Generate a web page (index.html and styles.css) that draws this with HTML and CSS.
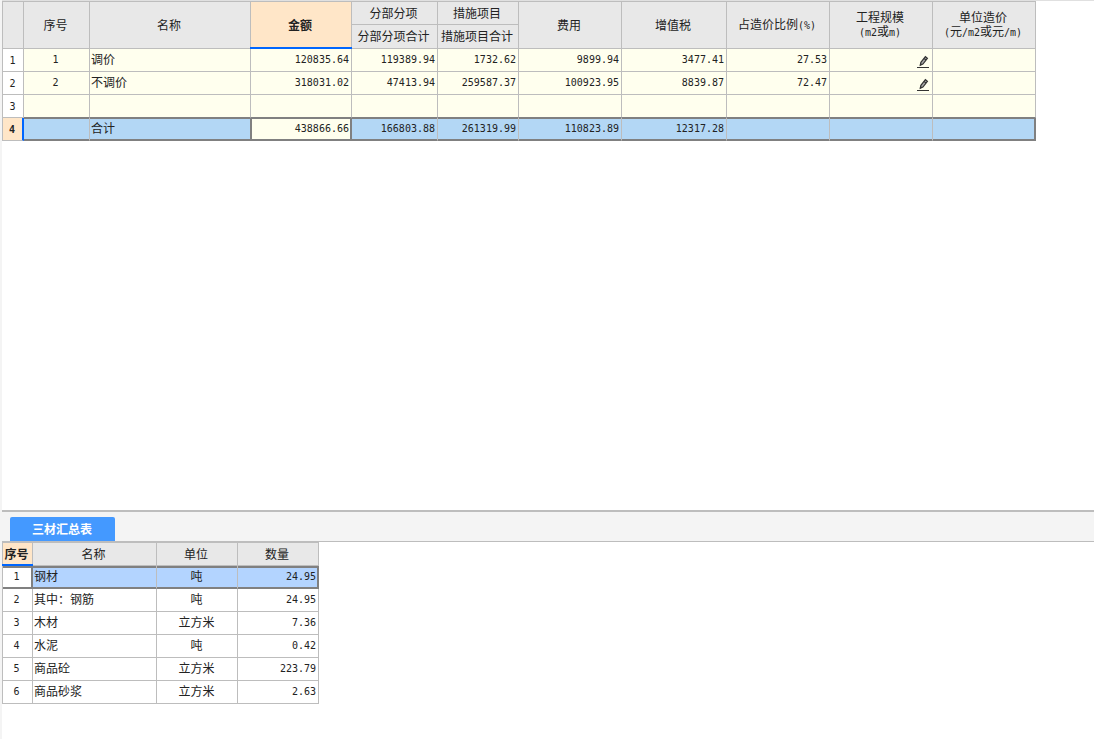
FILE: index.html
```html
<!DOCTYPE html>
<html lang="zh-CN">
<head>
<meta charset="utf-8">
<meta name="viewport" content="width=device-width, initial-scale=1">
<title>造价汇总</title>
<link rel="stylesheet" href="styles.css">
</head>
<body>
<main class="workspace">
  <section class="pane-main">
    <table class="grid cost">
      <colgroup>
        <col class="c-row"><col class="c-no"><col class="c-name"><col class="c-amount"><col class="c-part"><col class="c-measure"><col class="c-wide"><col class="c-tax"><col class="c-wide"><col class="c-wide"><col class="c-wide">
      </colgroup>
      <thead>
        <tr class="head-top">
          <th rowspan="2"></th>
          <th rowspan="2">序号</th>
          <th rowspan="2">名称</th>
          <th rowspan="2" class="active">金额</th>
          <th>分部分项</th>
          <th>措施项目</th>
          <th rowspan="2">费用</th>
          <th rowspan="2">增值税</th>
          <th rowspan="2">占造价比例<span class="mono">(%)</span></th>
          <th rowspan="2" class="two-line">工程规模<br><span class="mono">(m2</span>或<span class="mono">m)</span></th>
          <th rowspan="2" class="two-line">单位造价<br><span class="mono">(</span>元<span class="mono">/m2</span>或元<span class="mono">/m)</span></th>
        </tr>
        <tr class="head-sub">
          <th>分部分项合计</th>
          <th>措施项目合计</th>
        </tr>
      </thead>
      <tbody>
        <tr>
          <th class="row-no">1</th><td class="mid mono">1</td><td>调价</td><td class="num">120835.64</td><td class="num">119389.94</td><td class="num">1732.62</td><td class="num">9899.94</td><td class="num">3477.41</td><td class="num">27.53</td>
          <td class="tool"><button class="edit" type="button" aria-label="编辑"><svg viewBox="0 0 12 13" width="12" height="13"><path d="M3.3 10.2 3.9 7.3 8.4 1.7 10.4 3.3 5.9 9Z" fill="#aaa" stroke="#333" stroke-width="1.2"/><path d="M7 3.4 9 5M3.3 10.2 4.2 8.6" stroke="#333" stroke-width="1.2"/><path d="M0 12.5H12" stroke="#333"/></svg></button></td><td></td>
        </tr>
        <tr>
          <th class="row-no">2</th><td class="mid mono">2</td><td>不调价</td><td class="num">318031.02</td><td class="num">47413.94</td><td class="num">259587.37</td><td class="num">100923.95</td><td class="num">8839.87</td><td class="num">72.47</td>
          <td class="tool"><button class="edit" type="button" aria-label="编辑"><svg viewBox="0 0 12 13" width="12" height="13"><path d="M3.3 10.2 3.9 7.3 8.4 1.7 10.4 3.3 5.9 9Z" fill="#aaa" stroke="#333" stroke-width="1.2"/><path d="M7 3.4 9 5M3.3 10.2 4.2 8.6" stroke="#333" stroke-width="1.2"/><path d="M0 12.5H12" stroke="#333"/></svg></button></td><td></td>
        </tr>
        <tr class="before-total">
          <th class="row-no">3</th><td></td><td></td><td></td><td></td><td></td><td></td><td></td><td></td><td></td><td></td>
        </tr>
        <tr class="selected">
          <th class="row-no current">4</th><td></td><td class="before-focus">合计</td><td class="num focus">438866.66</td><td class="num">166803.88</td><td class="num">261319.99</td><td class="num">110823.89</td><td class="num">12317.28</td><td></td><td></td><td class="last"></td>
        </tr>
      </tbody>
    </table>
  </section>

  <section class="pane-sub">
    <div class="tabs" role="tablist">
      <button class="tab" type="button" role="tab" aria-selected="true">三材汇总表</button>
    </div>
    <table class="grid material">
      <colgroup>
        <col class="m-no"><col class="m-name"><col class="m-unit"><col class="m-unit">
      </colgroup>
      <thead>
        <tr><th class="active">序号</th><th>名称</th><th>单位</th><th>数量</th></tr>
      </thead>
      <tbody>
        <tr class="selected"><td class="mid mono focus">1</td><td>钢材</td><td class="mid">吨</td><td class="num last">24.95</td></tr>
        <tr><td class="mid mono">2</td><td>其中：钢筋</td><td class="mid">吨</td><td class="num">24.95</td></tr>
        <tr><td class="mid mono">3</td><td>木材</td><td class="mid">立方米</td><td class="num">7.36</td></tr>
        <tr><td class="mid mono">4</td><td>水泥</td><td class="mid">吨</td><td class="num">0.42</td></tr>
        <tr><td class="mid mono">5</td><td>商品砼</td><td class="mid">立方米</td><td class="num">223.79</td></tr>
        <tr><td class="mid mono">6</td><td>商品砂浆</td><td class="mid">立方米</td><td class="num">2.63</td></tr>
      </tbody>
    </table>
  </section>
</main>
</body>
</html>
```
FILE: styles.css
```css
:root {
  --line: #bdbdbd;
  --select-line: #808080;
  --blue: #0066ff;
  --head: #e8e8e8;
  --active: #ffe6c8;
  --paper: #ffffee;
  --chrome: #f4f4f4;
}

* { box-sizing: border-box; }

body {
  margin: 0;
  background: #fff;
  color: #222;
  font: 12px/14px "Noto Sans CJK SC", sans-serif;
}

.workspace {
  display: flex;
  flex-direction: column;
  min-height: 100vh;
  border-left: 2px solid var(--chrome);
}

.pane-main {
  flex: 1;
  border-top: 1px solid #e0e0e0;
}

.pane-sub {
  border-top: 2px solid var(--line);
  padding-bottom: 35px;
}

/* Grids */
.grid {
  table-layout: fixed;
  border-collapse: separate;
  border-spacing: 0;
  border-top: 1px solid var(--line);
  border-left: 1px solid var(--line);
}

.grid th,
.grid td {
  height: 23px;
  padding: 0 2px 2px 1px;
  border-right: 1px solid var(--line);
  border-bottom: 1px solid var(--line);
  text-align: left;
  vertical-align: middle;
  white-space: nowrap;
}

.grid th {
  padding: 0 2px 0 0;
  background: var(--head);
  font-weight: 400;
  text-align: center;
}

.grid .head-sub th {
  height: 24px;
  padding-bottom: 2px;
}

.grid th.active {
  position: relative;
  background: var(--active);
  font-weight: 700;
}

.active::after {
  content: "";
  position: absolute;
  right: -1px;
  bottom: -1px;
  left: -1px;
  height: 2px;
  background: var(--blue);
}

.mono,
.grid .num,
.grid .row-no {
  font-family: "DejaVu Sans Mono", monospace;
  font-size: 10px;
}

.grid .num {
  padding-bottom: 0;
  text-align: right;
}

.grid .mid { text-align: center; }

.grid .mid.mono { padding: 0 2px 0 0; }

.grid .row-no {
  padding: 1px 1px 0 0;
  background: #fff;
}

.cost { width: 1034px; }
.material { width: 317px; }
.cost td { background: var(--paper); }

.c-row { width: 21px; }
.c-no { width: 66px; }
.c-name { width: 161px; }
.c-amount { width: 101px; }
.c-part { width: 86px; }
.c-measure { width: 81px; }
.c-wide { width: 103px; }
.c-tax { width: 105px; }

.m-no { width: 30px; }
.m-name { width: 124px; }
.m-unit { width: 81px; }

/* Selection */
.cost .before-total td { border-bottom-color: var(--select-line); }

.grid .selected td {
  border-bottom-color: var(--select-line);
  background: #b3d7f5;
  box-shadow: inset 0 1px var(--select-line), inset 0 -1px var(--select-line);
}

.material .selected td {
  background: #b3d4ff;
  box-shadow: inset 0 2px var(--select-line), inset 0 -1px var(--select-line);
}

.grid .selected .last {
  border-right-color: var(--select-line);
  box-shadow: inset 0 1px var(--select-line), inset -1px -1px var(--select-line);
}

.material .selected .last {
  box-shadow: inset 0 2px var(--select-line), inset -1px -1px var(--select-line);
}

.grid .selected .before-focus { border-right-color: var(--select-line); }

.grid .selected .focus {
  border-right-color: var(--select-line);
  background: var(--paper);
  box-shadow: inset 1px 1px var(--select-line), inset -1px -1px var(--select-line);
}

.material .selected .focus {
  background: #fff;
  box-shadow: inset 0 2px var(--select-line), inset -1px -1px var(--select-line);
}

.grid .row-no.current {
  border-right: 2px solid var(--blue);
  background: var(--active);
  font-weight: 700;
}

/* Cell tool */
.grid .tool {
  padding: 0 3px 0 0;
  text-align: right;
}

.edit {
  padding: 0;
  border: 0;
  background: none;
  line-height: 0;
  vertical-align: middle;
}

.edit svg {
  display: block;
  fill: none;
}

/* Tabs */
.tabs {
  display: flex;
  padding: 5px 8px 0;
  border-bottom: 1px solid var(--line);
  background: var(--chrome);
}

.tab {
  height: 24px;
  padding: 0 23px 0 22px;
  border: 0;
  border-radius: 2px 2px 0 0;
  background: #4499ff;
  color: #fff;
  font: 700 12px/24px "Noto Sans CJK SC", sans-serif;
}
```
